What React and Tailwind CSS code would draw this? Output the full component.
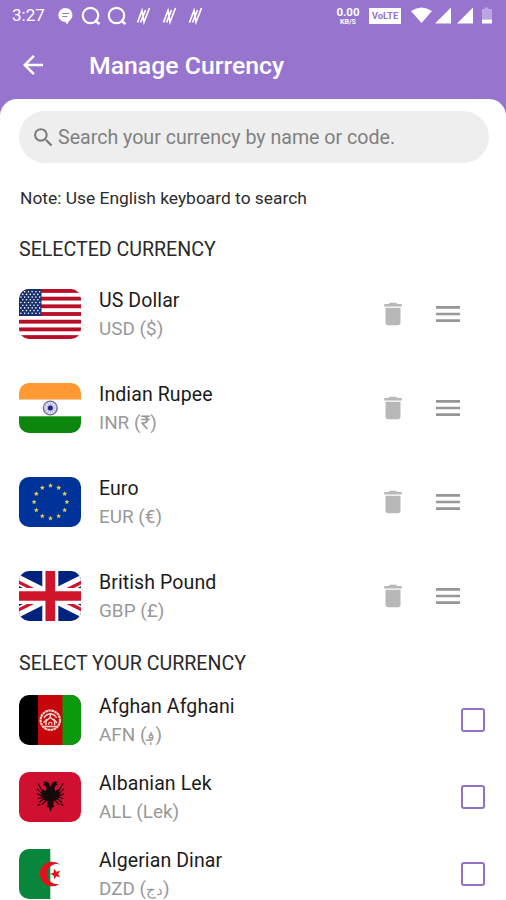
import React from 'react';
import { MdArrowBack, MdDelete, MdMenu, MdSearch } from 'react-icons/md';

// Five-pointed star centred on cx, cy
function star(cx, cy, r, turn = 0) {
  const pts = [];
  for (let i = 0; i < 10; i++) {
    const a = (Math.PI * i) / 5 - Math.PI / 2 + turn;
    const rad = i % 2 ? r * 0.45 : r;
    pts.push(`${cx + rad * Math.cos(a)},${cy + rad * Math.sin(a)}`);
  }
  return pts.join(' ');
}

function UsFlag() {
  return (
    <>
      <rect width="62" height="50" fill="#fff" />
      {[0, 1, 2, 3, 4, 5, 6].map((i) => (
        <rect key={i} y={i * 7.69} width="62" height="3.85" fill="#b90e27" />
      ))}
      <rect width="22.5" height="27" fill="#1a2f6e" />
      {[0, 1, 2, 3, 4, 5, 6, 7, 8].map((row) =>
        [0, 1, 2, 3, 4, 5].map((col) =>
          row % 2 && col === 5 ? null : (
            <circle key={`${row}-${col}`} cx={1.9 + col * 3.75 + (row % 2) * 1.87} cy={2.7 + row * 2.7} r="0.8" fill="#fff" />
          )
        )
      )}
    </>
  );
}

function IndiaFlag() {
  return (
    <>
      <rect width="62" height="50" fill="#fff" />
      <rect width="62" height="16.5" fill="#ff9933" />
      <rect y="33.3" width="62" height="16.7" fill="#0c860c" />
      <circle cx="31.3" cy="25" r="6.9" fill="#e6e6f3" stroke="#6c6c9b" strokeWidth="1.4" />
      {[0, 1, 2, 3, 4, 5].map((i) => (
        <path key={i} d="M31.3 18.5v13" stroke="#8585bd" strokeWidth="0.5" transform={`rotate(${i * 30} 31.3 25)`} />
      ))}
      <circle cx="31.3" cy="25" r="2.5" fill="#22228a" />
    </>
  );
}

function EuFlag() {
  return (
    <>
      <rect width="62" height="50" fill="#039" />
      {[0, 1, 2, 3, 4, 5, 6, 7, 8, 9, 10, 11].map((i) => (
        <polygon
          key={i}
          points={star(31.5 + 16.4 * Math.sin((i * Math.PI) / 6), 25 - 16.4 * Math.cos((i * Math.PI) / 6), 2.6)}
          fill="#e3ce4c"
        />
      ))}
    </>
  );
}

function UkFlag() {
  return (
    <g transform="translate(-18.7 0)">
      <rect width="100" height="50" fill="#00247d" />
      <path d="M0 0L100 50M100 0L0 50" stroke="#fff" strokeWidth="10" />
      <path d="M0 1.9L50 26.9M50 23.1L100 48.1M100 1.9L50 26.9M50 23.1L0 48.1" stroke="#cf142b" strokeWidth="3.3" />
      <path d="M50 0V50M0 25H100" stroke="#fff" strokeWidth="16" />
      <path d="M50 0V50M0 25H100" stroke="#cf142b" strokeWidth="9.7" />
    </g>
  );
}

function AfghanFlag() {
  return (
    <>
      <rect width="62" height="50" fill="#000" />
      <rect x="19" width="25" height="50" fill="#c7060b" />
      <rect x="43.5" width="18.5" height="50" fill="#0b9a0b" />
      <g fill="none" stroke="#f0d5ca">
        <circle cx="31.3" cy="25.2" r="9.7" strokeWidth="2.2" strokeDasharray="2.6 0.5" />
        <path d="M25 23a7 7 0 0 1 12.6 0M24.5 28l3.5-4M38 28l-3.5-4" strokeWidth="1.5" />
        <path d="M27 30v-4l4.3-3.5 4.3 3.5v4M31.3 18v5M25 31.5h12.6" strokeWidth="1.5" />
        <path d="M29.8 30v-2.5h3V30" strokeWidth="1" />
      </g>
    </>
  );
}

function AlbaniaFlag() {
  return (
    <>
      <rect width="62" height="50" fill="#d01030" />
      <g transform="translate(-0.5 -0.5)">
        <path
          d="M32 15.5l-1.8-4.2-2.8-1.6-2.8 1.3 1.8 1.2-2.2.8 2.4 1 1.5 2.2-.8 3.6-3.2-2.4-1.8 5 1 3.6 2.5 2.4 2.8 1 .6 3.2-1 2.8 2.2.6L32 40.5l1.6-4.5 2.2-.6-1-2.8.6-3.2 2.8-1 2.5-2.4 1-3.6-1.8-5-3.2 2.4-.8-3.6 1.5-2.2 2.4-1-2.2-.8 1.8-1.2-2.8-1.3-2.8 1.6z"
          fill="#16090b"
        />
        <g fill="none" stroke="#16090b" strokeWidth="1.1">
          <path d="M24 20l-4.5-8M23 22l-4.5-5M23 24.5l-4.5-2.5M23.5 26l-4.5 1M25 27.5l-4.5 3.5M27.5 29l-4 4M19 34l3-1.5" />
          <path d="M40 20l4.5-8M41 22l4.5-5M41 24.5l4.5-2.5M40.5 26l4.5 1M39 27.5l4.5 3.5M36.5 29l4 4M45 34l-3-1.5" />
        </g>
      </g>
    </>
  );
}

function AlgeriaFlag() {
  return (
    <>
      <rect width="62" height="50" fill="#fff" />
      <rect width="31.3" height="50" fill="#08873c" />
      <path d="M41 15.5A12.3 12.3 0 1 0 41 34.500A10 10 0 1 1 41 15.500z" fill="#e0121c" />
      <polygon points={star(36.7, 25, 5.5, -Math.PI / 2)} fill="#e0121c" />
    </>
  );
}

const selected = [
  { name: 'US Dollar', code: 'USD', symbol: '$', Flag: UsFlag },
  { name: 'Indian Rupee', code: 'INR', symbol: '₹', Flag: IndiaFlag },
  { name: 'Euro', code: 'EUR', symbol: '€', Flag: EuFlag },
  { name: 'British Pound', code: 'GBP', symbol: '£', Flag: UkFlag },
];

const available = [
  { name: 'Afghan Afghani', code: 'AFN', symbol: '؋', arabic: true, Flag: AfghanFlag },
  { name: 'Albanian Lek', code: 'ALL', symbol: 'Lek', Flag: AlbaniaFlag },
  { name: 'Algerian Dinar', code: 'DZD', symbol: 'دج', arabic: true, Flag: AlgeriaFlag },
];

function Currency({ name, code, symbol, arabic, Flag }) {
  return (
    <>
      <svg viewBox="0 0 62 50" className="w-[62px] h-[50px] rounded-[10px] shrink-0">
        <Flag />
      </svg>
      <div className="flex-1 ml-[18px] pt-px">
        <div className="h-7 pt-px leading-7 text-[19.5px] tracking-[0.1px] text-[#1c1c1c]">{name}</div>
        <div className="h-[29px] leading-[29px] text-[18.9px] text-[#999999]">
          {code} (<bdi className={arabic ? 'text-[15px]' : undefined}>{symbol}</bdi>)
        </div>
      </div>
    </>
  );
}

function StatusBar() {
  return (
    <div className="h-8 shrink-0 flex items-center px-3 text-white">
      <span className="w-[35px] text-[17px] leading-[30px] h-8">3:27</span>
      <svg width="160" height="22" viewBox="0 0 160 22" className="ml-[10px] -mt-0.5" fill="none" stroke="#fff">
        <path d="M8.5 4a7.2 7 0 0 1 4 12.6L10 20.5l-1.500-2.500A7.200 7 0 0 1 8.500 4z" fill="#fff" stroke="none" />
        <path d="M5.3 9.5h6.8M5.3 12.5h5" stroke="#9775cf" strokeWidth="1.2" />
        <circle cx="33.5" cy="11.5" r="7.7" strokeWidth="2.2" />
        <path d="M38 16.5l4.5 3.500" strokeWidth="2.4" />
        <circle cx="59.5" cy="11.5" r="7.7" strokeWidth="2.2" />
        <path d="M64 16.5l4.5 3.500" strokeWidth="2.4" />
        {[80, 106, 132].map((x) => (
          <path key={x} d="M0.500 18.500L5 6.500L7 18L12.500 4M3.500 18.500L8.500 6" transform={`translate(${x} 0)`} strokeWidth="1.7" />
        ))}
      </svg>
      <div className="ml-auto w-6 text-center font-bold">
        <div className="h-3 text-[11.5px] leading-3">0.00</div>
        <div className="h-[9px] text-[7px] leading-[9px]">KB/S</div>
      </div>
      <div className="ml-[9px] w-8 h-4 bg-white text-[#9775cf] text-[9.5px] leading-4 font-bold text-center">VoLTE</div>
      <svg width="84" height="18" viewBox="0 0 84 18" className="ml-[9px] -mt-0.5" fill="#fff">
        <path d="M1 5Q11.5 -2 22 5L11.5 17z" />
        <path d="M25 17.5L41 1.5v16zM47 17.5L63 1.5v16z" />
        <path d="M72 3h2.5V1.5h4V3H82v10.500H72z" fillOpacity="0.35" />
        <path d="M72 13.5h10v4H72z" />
      </svg>
    </div>
  );
}

export default function App() {
  return (
    <div className="w-[506px] h-[900px] overflow-hidden flex flex-col bg-[#9775cf] font-[Roboto,sans-serif]">
      <StatusBar />
      <header className="h-[67px] shrink-0 flex items-start pt-[18px] pl-[18px] text-white">
        <MdArrowBack size={30} />
        <h1 className="ml-[41px] text-[24.8px] leading-8 font-medium">Manage Currency</h1>
      </header>

      <main className="flex-1 bg-white rounded-t-[17px] px-[19px] pt-3 overflow-hidden">
        <label className="h-[52px] w-[470px] rounded-full bg-[#eeeeee] flex items-center pl-3 text-[#7c7c7c]">
          <MdSearch size={25} />
          <input
            type="text"
            placeholder="Search your currency by name or code."
            className="flex-1 ml-0.5 pt-0.5 bg-transparent outline-none text-[19.6px] placeholder:text-[#808080]"
          />
        </label>
        <p className="h-[70px] flex items-center pl-px text-[17.4px] text-[#2c2c2c]">Note: Use English keyboard to search</p>

        <h2 className="h-[34px] flex items-center text-[19.6px] text-[#2a2a2a]">SELECTED CURRENCY</h2>
        <ul>
          {selected.map((c) => (
            <li key={c.code} className="h-[94px] flex items-center pr-[23px]">
              <Currency {...c} />
              <button className="text-[#b8b8b8]"><MdDelete size={30} /></button>
              <button className="ml-6 text-[#979797]"><MdMenu size={32} /></button>
            </li>
          ))}
        </ul>

        <h2 className="h-[39px] pt-0.5 flex items-center text-[19.6px] text-[#2a2a2a]">SELECT YOUR CURRENCY</h2>
        <ul>
          {available.map((c) => (
            <li key={c.code} className="h-[76px] mb-px flex items-center">
              <Currency {...c} />
              <button role="checkbox" aria-checked="false" className="w-6 h-6 mr-[2px] border-2 border-[#9272c4] rounded-[3px]" />
            </li>
          ))}
        </ul>
      </main>
    </div>
  );
}
